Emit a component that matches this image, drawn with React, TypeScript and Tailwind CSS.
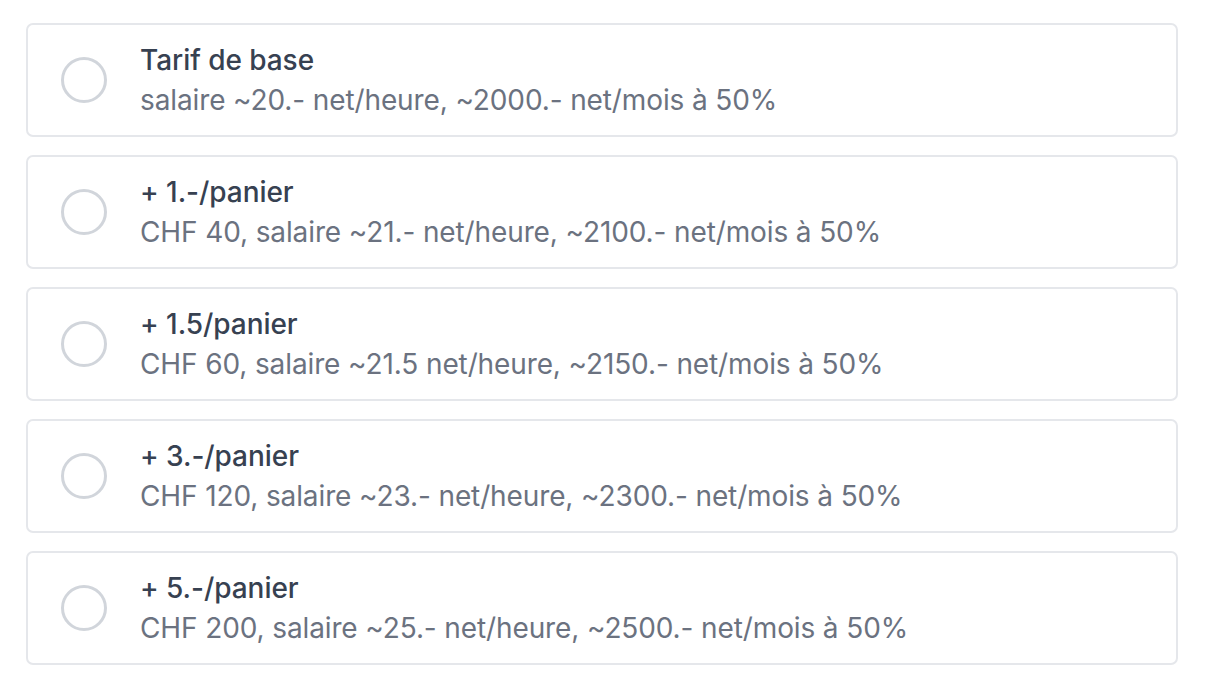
import React from 'react';

type Plan = {
  id: string;
  title: string;
  description: string;
};

const plans: Plan[] = [
  { id: 'base', title: 'Tarif de base', description: 'salaire ~20.- net/heure, ~2000.- net/mois à 50%' },
  { id: 'p1', title: '+ 1.-/panier', description: 'CHF 40, salaire ~21.- net/heure, ~2100.- net/mois à 50%' },
  { id: 'p15', title: '+ 1.5/panier', description: 'CHF 60, salaire ~21.5 net/heure, ~2150.- net/mois à 50%' },
  { id: 'p3', title: '+ 3.-/panier', description: 'CHF 120, salaire ~23.- net/heure, ~2300.- net/mois à 50%' },
  { id: 'p5', title: '+ 5.-/panier', description: 'CHF 200, salaire ~25.- net/heure, ~2500.- net/mois à 50%' },
];

const PlanOption = ({ plan, checked, onSelect }: { plan: Plan; checked: boolean; onSelect: () => void }) => {
  return (
    <label className="flex items-center gap-[33px] pl-[33px] pr-6 py-[15px] border-2 border-[#e5e7eb] rounded-[7px] bg-white cursor-pointer">
      <input type="radio" name="plan" className="sr-only" checked={checked} onChange={onSelect} />
      <span
        className={
          checked
            ? 'w-[46px] h-[46px] shrink-0 rounded-full border-[13px] border-[#4f46e5]'
            : 'w-[46px] h-[46px] shrink-0 rounded-full border-[3px] border-[#d1d5db]'
        }
      />
      <span className="flex flex-col">
        <span className="text-[28px] leading-[40px] font-medium text-[#374151] tracking-[-0.05px]">{plan.title}</span>
        <span className="text-[28px] leading-[40px] text-[#6b7280] tracking-[-0.12px]">{plan.description}</span>
      </span>
    </label>
  );
};

export default function App() {
  const [selected, setSelected] = React.useState<string | null>(null);

  return (
    <div className="min-h-screen bg-white px-[26px] pt-[23px] pb-6 font-['Inter',sans-serif] antialiased">
      <div className="flex flex-col gap-[18px] w-[1152px]">
        {plans.map((plan) => (
          <PlanOption
            key={plan.id}
            plan={plan}
            checked={selected === plan.id}
            onSelect={() => setSelected(plan.id)}
          />
        ))}
      </div>
    </div>
  );
}
